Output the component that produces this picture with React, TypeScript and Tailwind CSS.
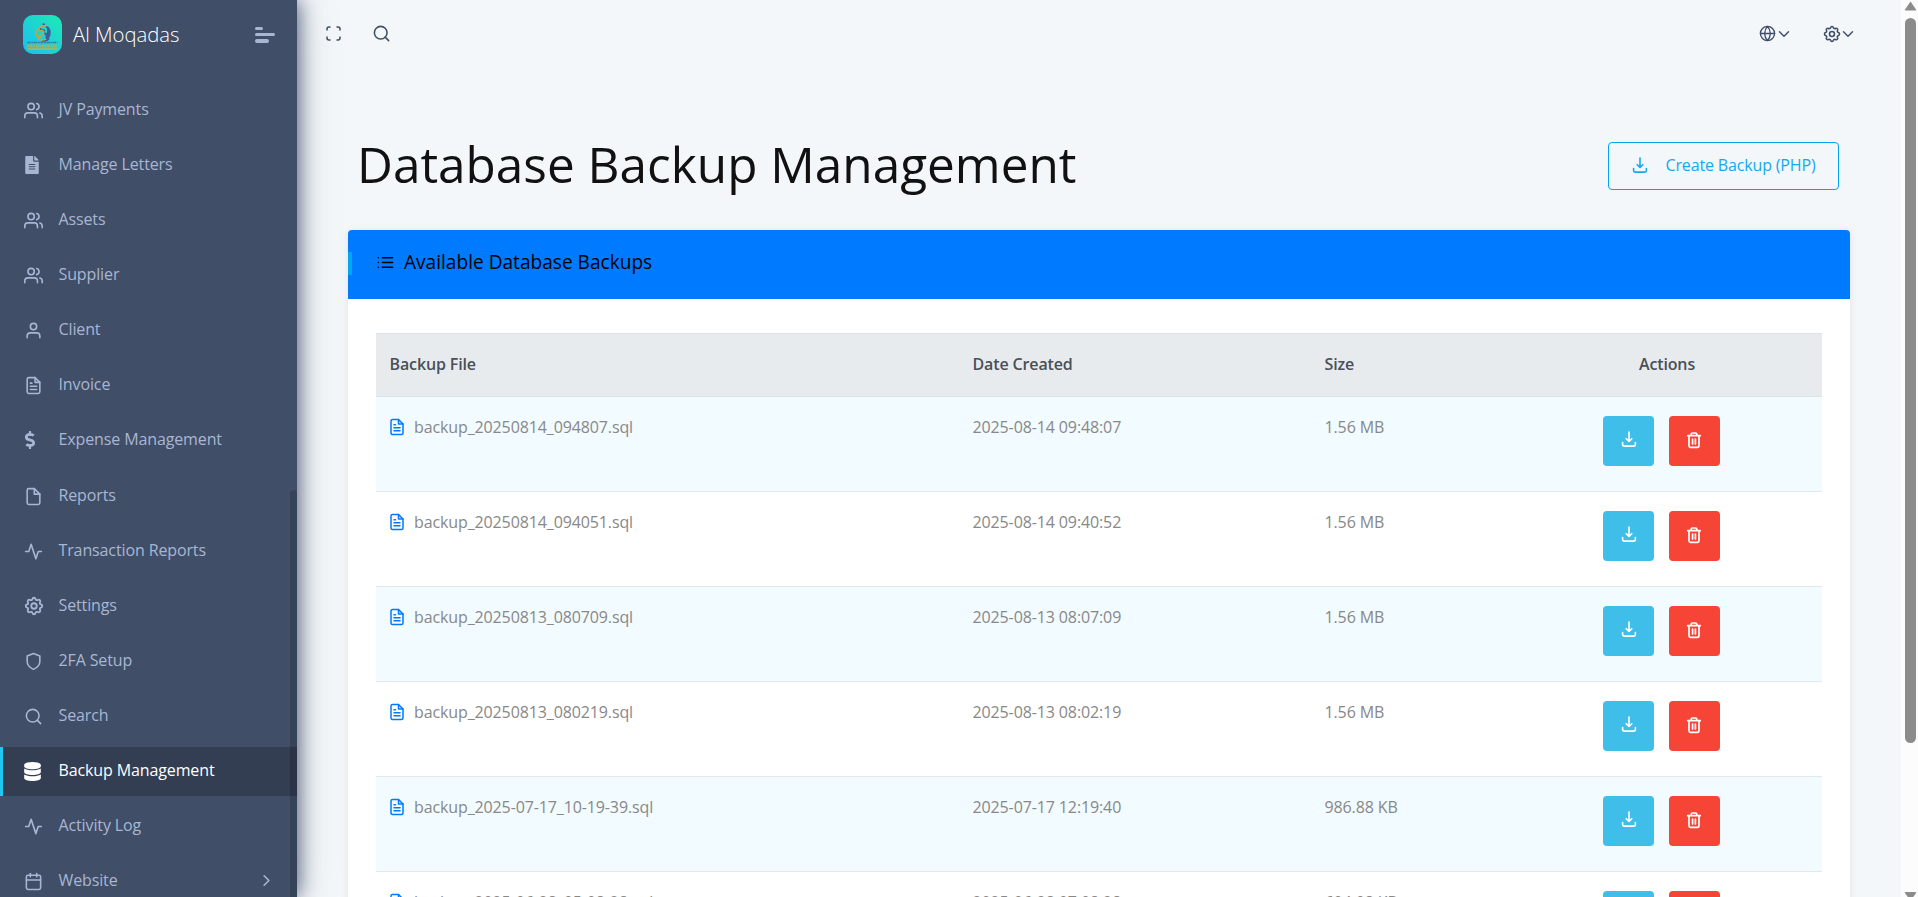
import type { ReactNode } from "react";
import { FiUsers, FiUser, FiFileText, FiFile, FiActivity, FiShield, FiSearch, FiCalendar, FiChevronRight, FiChevronDown, FiList, FiGlobe } from "react-icons/fi";
import { FaFileAlt, FaDollarSign, FaDatabase } from "react-icons/fa";
import { TbSettings } from "react-icons/tb";

type Item = { label: string; icon: ReactNode; active?: boolean; arrow?: boolean; tall?: boolean };

const users = <FiUsers size={19} />;

const items: Item[] = [
  { label: "JV Payments", icon: users },
  { label: "Manage Letters", icon: <FaFileAlt size={18} className="-ml-[1.500px]" /> },
  { label: "Assets", icon: users },
  { label: "Supplier", icon: users },
  { label: "Client", icon: <FiUser size={19} /> },
  { label: "Invoice", icon: <FiFileText size={19} /> },
  { label: "Expense Management", icon: <FaDollarSign size={18} className="-ml-[3.500px]" />, tall: true },
  { label: "Reports", icon: <FiFile size={19} /> },
  { label: "Transaction Reports", icon: <FiActivity size={19} /> },
  { label: "Settings", icon: <TbSettings size={22} className="-ml-[1px] -mt-[1px]" /> },
  { label: "2FA Setup", icon: <FiShield size={19} /> },
  { label: "Search", icon: <FiSearch size={19} /> },
  { label: "Backup Management", icon: <FaDatabase size={19} className="-ml-[1px]" />, active: true },
  { label: "Activity Log", icon: <FiActivity size={19} /> },
  { label: "Website", icon: <FiCalendar size={19} />, arrow: true },
];

const rows = [
  ["backup_20250814_094807.sql", "2025-08-14 09:48:07", "1.56 MB"],
  ["backup_20250814_094051.sql", "2025-08-14 09:40:52", "1.56 MB"],
  ["backup_20250813_080709.sql", "2025-08-13 08:07:09", "1.56 MB"],
  ["backup_20250813_080219.sql", "2025-08-13 08:02:19", "1.56 MB"],
  ["backup_2025-07-17_10-19-39.sql", "2025-07-17 12:19:40", "986.88 KB"],
  ["backup_2025-06-28_05-08-28.sql", "2025-06-28 07:08:28", "604.08 KB"],
];

function Download() {
  return (
    <svg width="16" height="17" viewBox="0 0 16 17" fill="none" stroke="currentColor" strokeWidth="1.600" strokeLinecap="round" strokeLinejoin="round">
      <path d="M8 1v9M5.200 7.700 8 10.500l2.800-2.800" />
      <path d="M1.600 11.500v2c0 1 .5 1.600 1.500 1.600h9.800c1 0 1.500-.6 1.500-1.600v-2" />
    </svg>
  );
}

function Trash() {
  return (
    <svg width="16" height="18" viewBox="0 0 16 18" fill="none" stroke="currentColor" strokeWidth="1.700" strokeLinecap="round" strokeLinejoin="round">
      <path d="M1.700 4.700h12.600M5.200 4.500V3.300c0-.8.5-1.300 1.300-1.300h3c.8 0 1.300.5 1.300 1.300v1.200" />
      <path d="M3 4.800v10c0 .9.5 1.500 1.400 1.500h7.200c.9 0 1.400-.6 1.400-1.500v-10M6.600 8v5M9.400 8v5" />
    </svg>
  );
}

function Logo() {
  return (
    <svg width="39" height="39" viewBox="0 0 39 39">
      <defs>
        <linearGradient id="logo" x1="0" y1="1" x2="1" y2="0">
          <stop offset="0" stopColor="#1bbef0" />
          <stop offset="1" stopColor="#1eeab4" />
        </linearGradient>
      </defs>
      <rect width="39" height="39" rx="10" fill="url(#logo)" />
      <path d="M20 8.500l1.500 2M23 11.500c4 2 5 7 2 11.500M25 14v8M19 25.500c3 1 5 0 7-2M17 14l5 2M20.500 18l3 1v5" fill="none" stroke="#3d5c9b" strokeWidth="2" />
      <path d="M25 10.500c-7-.5-12 3.500-12 8s5 4 7 1-1-6-4-3M15 23c3 3 6 2 8 1" fill="none" stroke="#c2a548" strokeWidth="1.500" />
      <path d="M4.500 27.500h30" stroke="#337da9" strokeWidth="1.500" strokeDasharray="3 .8 2 .6" />
      <path d="M4.500 31h30" stroke="#a3b166" strokeWidth="3" strokeDasharray="1.800 .7 2.500 .8" />
      <path d="M4.500 34h30" stroke="#b4b454" strokeWidth="1.500" />
    </svg>
  );
}

function Sidebar() {
  return (
    <aside className="relative z-10 flex h-full w-[297px] shrink-0 flex-col bg-[#404e67] text-[#a9b6d3] shadow-[1px_0_20px_rgba(50,62,95,0.85),0_0_50px_rgba(0,0,0,0.1)]">
      <div className="flex h-[86px] shrink-0 items-start pl-[23px] pt-[15px]">
        <Logo />
        <div className="ml-[11px] w-[182px] whitespace-nowrap pt-[4px] text-[20.300px] leading-[30px] font-light text-white">Al Moqadas</div>
        <div className="mt-[12px] flex w-5 flex-col gap-[3px]">
          <span className="h-[3px] w-2 rounded-full bg-[#a9b6d3]" />
          <span className="h-[3px] w-5 rounded-full bg-[#a9b6d3]" />
          <span className="h-[4px] w-[14px] rounded-full bg-[#a9b6d3]" />
        </div>
      </div>
      <nav className="flex flex-col gap-[6px]">
        {items.map((it) => (
          <div
            key={it.label}
            className={`flex shrink-0 items-center border-l-[3px] pl-[21px] ${it.tall ? "h-[50px] pb-[2px]" : "h-[49px]"} ${it.active ? "border-[#1ec8f0] bg-[#333e53] text-white" : "border-transparent"}`}
          >
            <span className="flex w-[34.500px] items-center pb-[1px]">{it.icon}</span>
            <span className="whitespace-nowrap pb-[3px] text-[16px] leading-6 tracking-[-0.120px]">{it.label}</span>
            {it.arrow && <FiChevronRight size={19} className="ml-auto mr-[21px] mb-[2px]" />}
          </div>
        ))}
      </nav>
      <div className="absolute bottom-0 right-0 top-[490px] w-[7px] rounded-t-full bg-black/15" />
    </aside>
  );
}

const cols = "grid grid-cols-[583px_352px_201px_310px]";

export default function App() {
  return (
    <div className="flex h-[897px] w-[1918px] overflow-hidden bg-[#f3f7fa] font-['Open_Sans',sans-serif] text-[16px]">
      <Sidebar />
      <main className="flex min-w-0 flex-1 flex-col">
        <header className="flex h-[68px] shrink-0 items-center pb-[1px] pl-[28px] pr-[45px] text-[#404e67]">
          <svg width="17" height="17" viewBox="0 0 17 17" fill="none" stroke="currentColor" strokeWidth="1.500">
            <path d="M2 5.500V4a2 2 0 0 1 2-2h1.500M11.500 2H13a2 2 0 0 1 2 2v1.500M15 11.500V13a2 2 0 0 1-2 2h-1.500M5.500 15H4a2 2 0 0 1-2-2v-1.500" />
          </svg>
          <FiSearch size={19} className="ml-[30px]" strokeWidth={2} />
          <div className="ml-auto flex items-center">
            <FiGlobe size={17} strokeWidth={1.900} />
            <FiChevronDown size={18} strokeWidth={1.900} className="-ml-[1px]" />
            <TbSettings size={20} strokeWidth={1.900} className="ml-[29px]" />
            <FiChevronDown size={18} strokeWidth={1.900} className="-ml-[3px] -mr-[1px]" />
          </div>
        </header>
        <div className="flex h-[162px] shrink-0 items-start pl-[60px] pr-[62px] pt-[74px]">
          <h1 className="mt-[-8px] whitespace-nowrap text-[49.500px] leading-[60px] text-[#111]">Database Backup Management</h1>
          <button className="ml-auto flex h-[48px] w-[231px] items-center rounded border border-[#00a5ec] pb-[2px] pl-[23px] text-[#14a8ef]">
            <Download />
            <span className="ml-[17.500px] whitespace-nowrap tracking-[-0.150px]">Create Backup (PHP)</span>
          </button>
        </div>
        <section className="ml-[51px] flex w-[1502px] flex-1 flex-col rounded-t bg-white shadow-[0_1px_8px_rgba(0,0,0,0.08)]">
          <div className="flex h-[69px] shrink-0 items-start rounded-t bg-[#007bff] pt-[22px] text-black">
            <span className="h-[23px] w-1 bg-[#00a8f0]" />
            <FiList size={19} className="ml-[24px] mt-[1px]" />
            <h4 className="ml-[9px] whitespace-nowrap pt-[1px] text-[19.100px] leading-[19px]">Available Database Backups</h4>
          </div>
          <div className="flex flex-col px-7 pt-[34px]">
            <div className={`${cols} h-[64px] items-center border-y border-[#dfe2e5] bg-[#e8ebee] pb-[3px] font-semibold tracking-[-0.130px] text-[#495057]`}>
              <span className="pl-[13.500px]">Backup File</span>
              <span className="pl-[13.500px]">Date Created</span>
              <span className="pl-[13.500px]">Size</span>
              <span className="text-center">Actions</span>
            </div>
            {rows.map((r, i) => (
              <div key={r[0]} className={`${cols} h-[95px] shrink-0 items-start border-b border-[#e3e8eb] tracking-[-0.120px] text-[#888] ${i % 2 === 0 ? "bg-[#f2fbff]" : "bg-white"}`}>
                <span className="flex items-center pl-[12px] pt-[18px]">
                  <FiFileText size={18} className="text-[#007bff]" />
                  <span className="ml-[8px]">{r[0]}</span>
                </span>
                <span className="pl-[13.500px] pt-[18px]">{r[1]}</span>
                <span className="pl-[13.500px] pt-[18px]">{r[2]}</span>
                <span className="flex gap-[15px] pl-[91px] pt-[19px] text-white">
                  <button className="flex h-[50px] w-[51px] items-center justify-center rounded bg-[#3fbeea] pb-[3px]"><Download /></button>
                  <button className="flex h-[50px] w-[51px] items-center justify-center rounded bg-[#f64437] pb-[2px] pr-[1px]"><Trash /></button>
                </span>
              </div>
            ))}
          </div>
        </section>
      </main>
      <div className="flex w-[17px] shrink-0 flex-col items-center bg-[#fcfcfc] pl-[2px]">
        <svg width="13" height="18" viewBox="0 0 13 18" className="shrink-0"><path d="M6.500 1.500 12 9.500q.5 1-.5 1H1.500q-1 0-.5-1z" fill="#8b8b8b" /></svg>
        <div className="h-[725px] w-[11px] shrink-0 rounded-full bg-[#8b8b8b]" />
        <svg width="13" height="8" viewBox="0 0 13 8" className="mt-[149px] shrink-0"><path d="M6.500 9 1 1q-.5-1 .5-1h10q1 0 .5 1z" fill="#8b8b8b" /></svg>
      </div>
    </div>
  );
}
